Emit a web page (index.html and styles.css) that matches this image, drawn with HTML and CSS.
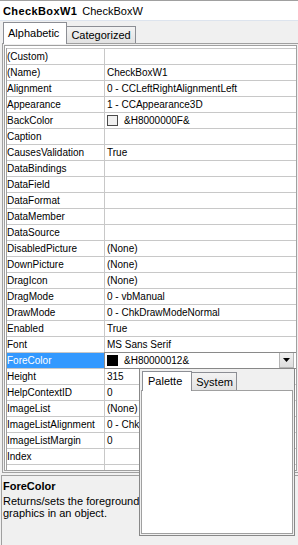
FILE: index.html
```html
<!DOCTYPE html>
<html lang="en">
<head>
  <meta charset="UTF-8">
  <meta name="viewport" content="width=device-width, initial-scale=1.0">
  <title>Properties - CheckBoxW1</title>
  <link rel="stylesheet" href="styles.css">
</head>
<body>
  <div class="header">
    <b>CheckBoxW1</b>
    <span>CheckBoxW</span>
  </div>

  <div class="tabs">
    <div class="tab active">Alphabetic</div>
    <div class="tab">Categorized</div>
  </div>

  <div class="page">
    <div class="grid">
      <div class="rows">
        <div class="row"><div class="name">(Custom)</div><div class="value"></div></div>
        <div class="row"><div class="name">(Name)</div><div class="value">CheckBoxW1</div></div>
        <div class="row"><div class="name">Alignment</div><div class="value">0 - CCLeftRightAlignmentLeft</div></div>
        <div class="row"><div class="name">Appearance</div><div class="value">1 - CCAppearance3D</div></div>
        <div class="row"><div class="name">BackColor</div><div class="value"><span class="swatch"></span>&amp;H8000000F&amp;</div></div>
        <div class="row"><div class="name">Caption</div><div class="value"></div></div>
        <div class="row"><div class="name">CausesValidation</div><div class="value">True</div></div>
        <div class="row"><div class="name">DataBindings</div><div class="value"></div></div>
        <div class="row"><div class="name">DataField</div><div class="value"></div></div>
        <div class="row"><div class="name">DataFormat</div><div class="value"></div></div>
        <div class="row"><div class="name">DataMember</div><div class="value"></div></div>
        <div class="row"><div class="name">DataSource</div><div class="value"></div></div>
        <div class="row"><div class="name">DisabledPicture</div><div class="value">(None)</div></div>
        <div class="row"><div class="name">DownPicture</div><div class="value">(None)</div></div>
        <div class="row"><div class="name">DragIcon</div><div class="value">(None)</div></div>
        <div class="row"><div class="name">DragMode</div><div class="value">0 - vbManual</div></div>
        <div class="row"><div class="name">DrawMode</div><div class="value">0 - ChkDrawModeNormal</div></div>
        <div class="row"><div class="name">Enabled</div><div class="value">True</div></div>
        <div class="row"><div class="name">Font</div><div class="value">MS Sans Serif</div></div>
        <div class="row selected">
          <div class="name">ForeColor</div>
          <div class="value edit">
            <span class="swatch black"></span>&amp;H80000012&amp;
            <span class="drop"><svg width="7" height="4" viewBox="0 0 7 4"><path d="M0 0h7L3.5 4z" fill="#000"/></svg></span>
          </div>
        </div>
        <div class="row"><div class="name">Height</div><div class="value">315</div></div>
        <div class="row"><div class="name">HelpContextID</div><div class="value">0</div></div>
        <div class="row"><div class="name">ImageList</div><div class="value">(None)</div></div>
        <div class="row"><div class="name">ImageListAlignment</div><div class="value">0 - ChkImageListAlignmentLeft</div></div>
        <div class="row"><div class="name">ImageListMargin</div><div class="value">0</div></div>
        <div class="row"><div class="name">Index</div><div class="value"></div></div>
        <div class="row"><div class="name"></div><div class="value"></div></div>
      </div>
    </div>
  </div>

  <div class="desc">
    <div class="desc-title">ForeColor</div>
    <div class="desc-text">Returns/sets the foreground color used to display text and<br>graphics in an object.</div>
  </div>

  <!-- colour picker dropped down from the ForeColor row -->
  <div class="picker">
    <div class="picker-tabs">
      <div class="ptab active">Palette</div>
      <div class="ptab">System</div>
    </div>
    <div class="picker-body"></div>
  </div>
</body>
</html>
```

FILE: styles.css
```css
body {
  margin: 0;
  height: 545px;
  position: relative;
  overflow: hidden;
  background-color: #f0f0f0;
  font-family: "Liberation Sans", Arial, sans-serif;
  font-size: 11px;
  color: #000;
}

.header {
  display: flex;
  gap: 5px;
  height: 17px;
  padding: 2px 0 0 3px;
  line-height: 17px;
  background-color: #fff;
  border-top: 1px solid #a0a0a0;
  border-bottom: 1px solid #dde4ee;
  white-space: nowrap;
}

.header b {
  letter-spacing: 0.4px;
}

.tabs {
  display: flex;
  align-items: flex-end;
  height: 22px;
  padding-left: 3px;
}

.tab {
  height: 16px;
  line-height: 16px;
  padding: 0 4px;
  margin-left: -1px;
  border: 1px solid #8c8e94;
  border-bottom: none;
  background: linear-gradient(#f3f3f3, #e2e2e2);
  white-space: nowrap;
}

.tab.active {
  position: relative;
  z-index: 1;
  height: 21px;
  line-height: 20px;
  margin-left: 0;
  margin-bottom: -1px;
  padding: 0 7px 0 4px;
  background: #fff;
}

.page {
  width: 293px;
  margin-left: 2px;
  padding: 1px;
  border: 1px solid #a0a0a0;
}

.grid {
  height: 422px;
  padding: 2px 0 0 1px;
  border: 1px solid #a0a0a0;
  background-color: #fff;
  overflow: hidden;
}

.rows {
  border-left: 1px solid #a0a0a0;
}

.row {
  display: flex;
  height: 15px;
  line-height: 15px;
  font-size: 10px;
  border-top: 1px solid #c8c8c8;
}

.name {
  width: 97px;
  flex-shrink: 0;
  border-right: 1px solid #c8c8c8;
  white-space: nowrap;
  overflow: hidden;
}

.value {
  flex: 1;
  display: flex;
  align-items: center;
  min-width: 0;
  padding-left: 2px;
  white-space: nowrap;
  overflow: hidden;
}

.swatch {
  flex-shrink: 0;
  width: 9px;
  height: 9px;
  margin-right: 6px;
  border: 1px solid #4a4a4a;
  background-color: #f0f0f0;
}

.swatch.black {
  background-color: #000;
  border-color: #000;
}

.row.selected .name {
  background-color: #3399ff;
  color: #fff;
}

.value.edit {
  outline: 1px solid #8a8a8a;
}

.drop {
  display: flex;
  align-items: center;
  justify-content: center;
  width: 13px;
  height: 14px;
  margin: 0 2px 0 auto;
  border: 1px solid #b5b5b5;
  border-top: none;
  background: linear-gradient(#f0f0f0, #dedede);
}

.desc {
  height: 66px;
  margin: 2px 0 0 1px;
  padding: 4px 0 0 1px;
  border-top: 1px solid #a0a0a0;
  border-left: 1px solid #a0a0a0;
  white-space: nowrap;
}

.desc-title {
  font-weight: bold;
  line-height: 13px;
  margin-bottom: 2px;
}

.desc-text {
  line-height: 12px;
}

.picker {
  position: absolute;
  left: 139px;
  top: 368px;
  width: 152px;
  padding: 1px;
  border: 1px solid #888;
  background-color: #f0f0f0;
}

.picker-tabs {
  display: flex;
  align-items: flex-end;
  height: 20px;
  padding-left: 1px;
}

.ptab {
  height: 17px;
  line-height: 19px;
  padding: 0 3px 0 4px;
  margin-left: -1px;
  border: 1px solid #8c8e94;
  border-bottom: none;
  background: linear-gradient(#f3f3f3, #e2e2e2);
}

.ptab.active {
  position: relative;
  z-index: 1;
  height: 19px;
  line-height: 18px;
  margin-left: 0;
  margin-bottom: -1px;
  padding: 0 9px 0 5px;
  background: #fff;
}

.picker-body {
  height: 142px;
  border: 1px solid #a0a0a0;
  background-color: #fff;
}
```
